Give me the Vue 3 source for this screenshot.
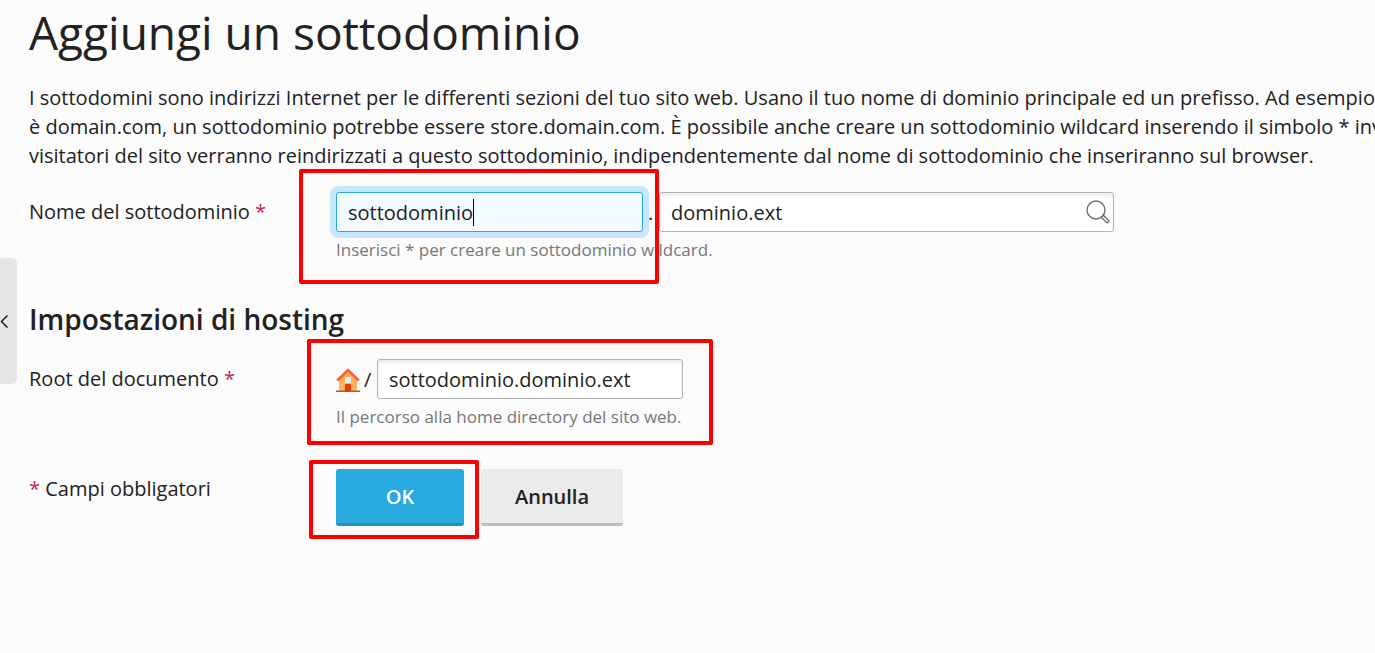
<script setup>
import { ref } from 'vue'

const subdomain = ref('sottodominio')
const domain = ref('dominio.ext')
const documentRoot = ref('sottodominio.dominio.ext')
const intro = [
  'I sottodomini sono indirizzi Internet per le differenti sezioni del tuo sito web. Usano il tuo nome di dominio principale ed un prefisso. Ad esempio,',
  'è domain.com, un sottodominio potrebbe essere store.domain.com. È possibile anche creare un sottodominio wildcard inserendo il simbolo * inv',
  'visitatori del sito verranno reindirizzati a questo sottodominio, indipendentemente dal nome di sottodominio che inseriranno sul browser.'
]
</script>

<template>
  <div class="page">
    <button class="collapse" type="button" aria-label="Comprimi">
      <svg width="8" height="14" viewBox="0 0 8 14" aria-hidden="true">
        <path d="M7.500 1.500 1.500 7.500 7.500 13.500" fill="none" stroke="#222" stroke-width="1.500" />
      </svg>
    </button>
    <main>
      <h1>Aggiungi un sottodominio</h1>
      <p class="intro">
        <span v-for="line in intro" :key="line">{{ line }}</span>
      </p>
      <form @submit.prevent>
        <div class="row">
          <label class="label" for="subdomain">Nome del sottodominio <b>*</b></label>
          <div class="field name-field">
            <div class="controls">
              <div class="box focused">
                <input id="subdomain" v-model="subdomain" type="text" />
                <i class="caret"></i>
              </div>
              <span class="dot">.</span>
              <div class="box domain">
                <input v-model="domain" type="text" aria-label="Dominio" />
                <svg class="search" width="26" height="26" viewBox="0 0 26 26" aria-hidden="true">
                  <g fill="none" stroke="#6e6e6e" stroke-width="1.400">
                    <circle cx="11" cy="11" r="9" />
                    <path d="m16.200 18.200 2-2 5.200 5a1.500 1.500 0 0 1-2.100 2.100Z" />
                  </g>
                </svg>
              </div>
            </div>
            <div class="hint">Inserisci * per creare un sottodominio wildcard.</div>
            <div class="mark mark-name"></div>
          </div>
        </div>

        <h2>Impostazioni di hosting</h2>

        <div class="row">
          <label class="label" for="root">Root del documento <b>*</b></label>
          <div class="field root-field">
            <div class="controls">
              <svg class="home" width="24" height="24" viewBox="0 0 24 24" aria-hidden="true">
                <path d="M3 11 12 3l9 8v12H3Z" fill="#ffb05c" />
                <path d="M9 9h6v6H9Z" fill="#d5f2fc" />
                <path d="M9 16h6v7H9Z" fill="#e93c08" />
                <path d="M1.300 12.500 12 2l10.700 10.500" fill="none" stroke="#ff5a36" stroke-width="2.600" />
                <path d="M0 22.500h24V24H0Z" fill="#a85832" />
              </svg>
              <span class="slash">/</span>
              <div class="box root">
                <input id="root" v-model="documentRoot" type="text" />
              </div>
            </div>
            <div class="hint">Il percorso alla home directory del sito web.</div>
            <div class="mark mark-root"></div>
          </div>
        </div>

        <div class="row footer">
          <div class="label required"><b>*</b> Campi obbligatori</div>
          <div class="field actions">
            <button class="ok" type="submit">OK</button>
            <button class="cancel" type="button">Annulla</button>
            <div class="mark mark-ok"></div>
          </div>
        </div>
      </form>
    </main>
  </div>
</template>

<style>
body { background: #fbfbfb; }
</style>

<style scoped>
.page {
  position: relative;
  box-sizing: border-box;
  min-height: 100vh;
  padding: 2px 0 0 29px;
  overflow: hidden;
  color: #222;
  font: 20px/29px "Open Sans", "Noto Sans", sans-serif;
}
h1 { margin: 0; font-size: 46px; line-height: 60px; font-weight: 400; }
.intro { margin: 21px 0 22px; white-space: nowrap; }
.intro span { display: block; }
.row { display: flex; }
.label { flex: 0 0 307px; box-sizing: border-box; padding-top: 5px; }
.label b { color: #c8254e; font-weight: 400; }
.field { position: relative; }
.name-field { flex: 0 1 778px; }
.root-field { flex: 0 1 347px; }
.controls { display: flex; align-items: center; }
.box { position: relative; flex: 1 1 0; }
.focused { flex: 0 1 307px; }
input {
  display: block;
  box-sizing: border-box;
  width: 100%;
  height: 40px;
  margin: 0;
  padding: 0 11px;
  border: 1px solid #b4b4b4;
  border-radius: 3px;
  outline: none;
  background: #fff;
  box-shadow: inset 0 3px 3px #00000014;
  color: inherit;
  font: inherit;
}
.focused input {
  border-color: #28aade;
  background: #f2faff;
  box-shadow: 0 0 0 6px #c8e7fc;
}
.caret { position: absolute; top: 7px; left: 137px; width: 1px; height: 27px; background: #000; }
.dot { flex: 0 0 16px; box-sizing: border-box; padding-left: 5px; }
.search { position: absolute; top: 7px; right: 3px; }
.hint { margin-top: 4px; color: #777; font-size: 17px; line-height: 28px; white-space: nowrap; }
h2 { margin: 35px 0 20px; font-size: 28px; line-height: 40px; font-weight: 600; }
.home { flex: none; margin-top: 2px; }
.slash { flex: 0 0 17px; box-sizing: border-box; padding-left: 4px; }
.footer { margin-top: 38px; }
.actions { display: flex; gap: 17px; }
.ok, .cancel {
  height: 57px;
  padding: 0;
  border: 0;
  border-bottom: 3px solid #2590bd;
  border-radius: 3px;
  background: #28aade;
  color: #fff;
  font: inherit;
  font-weight: 600;
}
.ok { width: 128px; }
.cancel { width: 142px; border-color: #bfbfbf; background: #ebebeb; color: #222; }
.mark { position: absolute; border: 4px solid #f00; border-radius: 2px; pointer-events: none; }
.mark-name { inset: -23px 455px -20px -37px; }
.mark-root { inset: -20px -30px -14px -29px; }
.mark-ok { inset: -9px 144px -13px -27px; }
.collapse {
  position: absolute;
  top: 258px;
  left: 0;
  width: 17px;
  height: 126px;
  padding: 0;
  border: 0;
  border-radius: 0 5px 5px 0;
  background: #e6e6e6;
  text-align: left;
}
.collapse svg { display: block; }
</style>
